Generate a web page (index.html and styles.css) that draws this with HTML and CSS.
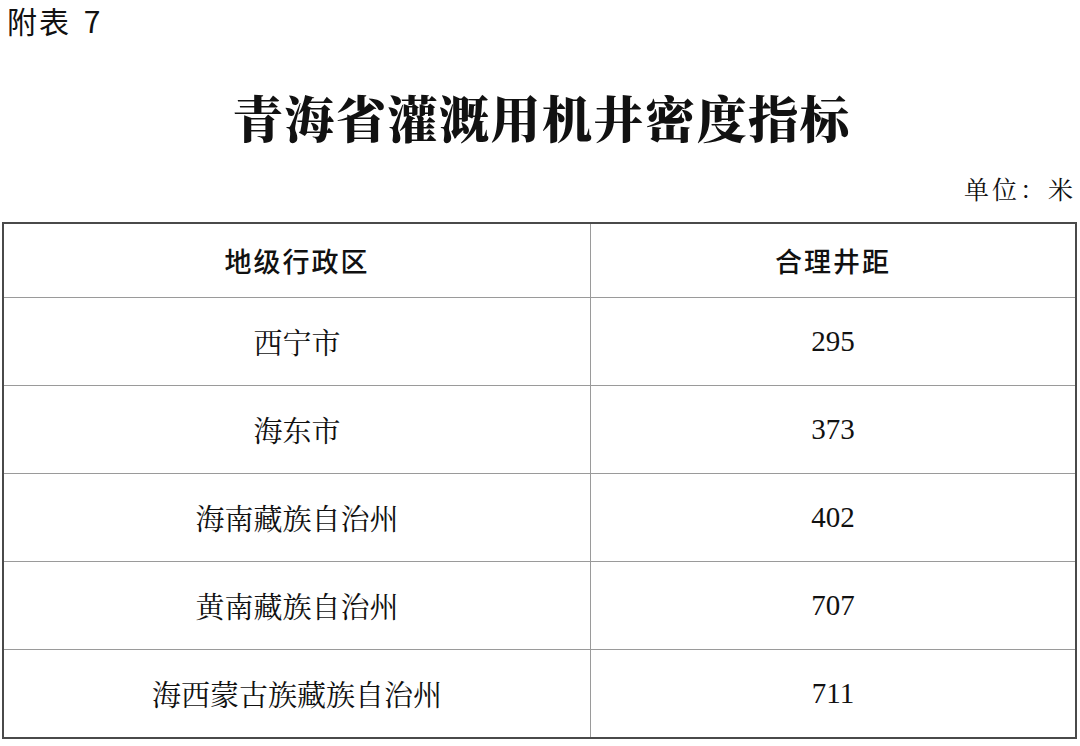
FILE: index.html
```html
<!DOCTYPE html>
<html lang="zh-CN">
<head>
<meta charset="utf-8">
<link rel="stylesheet" href="styles.css">
</head>
<body>
<div class="page">
  <div class="fig">附表 <span class="num">7</span></div>
  <h1 class="title">青海省灌溉用机井密度指标</h1>
  <div class="unit">单位：米</div>
  <table class="grid">
    <thead>
      <tr class="head"><th>地级行政区</th><th>合理井距</th></tr>
    </thead>
    <tbody>
      <tr><td>西宁市</td><td class="n">295</td></tr>
      <tr><td>海东市</td><td class="n">373</td></tr>
      <tr><td>海南藏族自治州</td><td class="n">402</td></tr>
      <tr><td>黄南藏族自治州</td><td class="n">707</td></tr>
      <tr><td>海西蒙古族藏族自治州</td><td class="n">711</td></tr>
    </tbody>
  </table>
</div>
</body>
</html>
```
FILE: styles.css
```css
html, body {
  margin: 0;
  padding: 0;
  background: #fff;
}
body {
  width: 1080px;
  height: 746px;
  overflow: hidden;
  color: #111;
  font-family: "Noto Serif CJK SC", "Noto Sans CJK SC", serif;
}
.page {
  display: flex;
  flex-direction: column;
}
.fig {
  height: 40px;
  line-height: 40px;
  padding-left: 7px;
  font-family: "Noto Sans CJK SC", sans-serif;
  font-size: 30px;
  letter-spacing: 2px;
}
.fig .num {
  font-family: "Noto Sans CJK SC", sans-serif;
  margin-left: 4px;
}
.title {
  margin: 35px 0 0 0;
  height: 82px;
  line-height: 82px;
  text-align: center;
  font-family: "Noto Serif CJK SC", "Noto Sans CJK SC", serif;
  font-weight: 900;
  font-size: 50px;
  letter-spacing: 1.5px;
  padding-left: 4px;
}
.unit {
  height: 65px;
  line-height: 62px;
  text-align: right;
  padding-right: 4px;
  font-size: 25px;
  font-weight: 400;
  letter-spacing: 3px;
}
.grid {
  margin-left: 2px;
  width: 1075px;
  border-collapse: collapse;
  border: 2px solid #4a4a4a;
  table-layout: fixed;
}
.grid th, .grid td {
  border: 1px solid #9a9a9a;
  text-align: center;
  padding: 0;
}
.grid th:first-child, .grid td:first-child {
  width: 586px;
}
.grid th {
  height: 73px;
  font-family: "Noto Sans CJK SC", sans-serif;
  font-weight: 500;
  font-size: 27px;
  letter-spacing: 2px;
}
.grid td {
  height: 87px;
  font-size: 29px;
  font-weight: 400;
}
.grid td.n {
  font-family: "Liberation Serif", serif;
  font-weight: 400;
  font-size: 29px;
}
```
